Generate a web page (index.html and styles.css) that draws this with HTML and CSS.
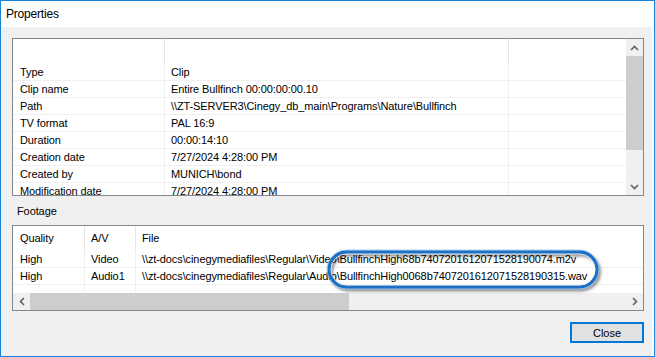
FILE: index.html
```html
<!DOCTYPE html>
<html lang="en">
<head>
    <meta charset="UTF-8">
    <title>Properties</title>
    <link rel="stylesheet" href="styles.css">
</head>
<body>
    <div class="window">
        <div class="titlebar">Properties</div>
        <div class="content">
            <div class="listbox props">
                <div class="list">
                    <div class="row head">
                        <div class="cell"></div>
                        <div class="cell"></div>
                        <div class="cell last"></div>
                    </div>
                    <div class="row"><div class="cell">Type</div><div class="cell">Clip</div><div class="cell last"></div></div>
                    <div class="row"><div class="cell">Clip name</div><div class="cell">Entire Bullfinch 00:00:00:00.10</div><div class="cell last"></div></div>
                    <div class="row"><div class="cell">Path</div><div class="cell">\\ZT-SERVER3\Cinegy_db_main\Programs\Nature\Bullfinch</div><div class="cell last"></div></div>
                    <div class="row"><div class="cell">TV format</div><div class="cell">PAL 16:9</div><div class="cell last"></div></div>
                    <div class="row"><div class="cell">Duration</div><div class="cell">00:00:14:10</div><div class="cell last"></div></div>
                    <div class="row"><div class="cell">Creation date</div><div class="cell">7/27/2024 4:28:00 PM</div><div class="cell last"></div></div>
                    <div class="row"><div class="cell">Created by</div><div class="cell">MUNICH\bond</div><div class="cell last"></div></div>
                    <div class="row"><div class="cell">Modification date</div><div class="cell">7/27/2024 4:28:00 PM</div><div class="cell last"></div></div>
                </div>
                <div class="vscroll">
                    <div class="arrow">
                        <svg width="9" height="6" viewBox="0 0 9 6"><path d="M1 5 L4.5 1.5 L8 5" fill="none" stroke="#606060" stroke-width="1.6"/></svg>
                    </div>
                    <div class="vthumb"></div>
                    <div class="track"></div>
                    <div class="arrow">
                        <svg width="9" height="6" viewBox="0 0 9 6"><path d="M1 1 L4.5 4.5 L8 1" fill="none" stroke="#606060" stroke-width="1.6"/></svg>
                    </div>
                </div>
            </div>

            <div class="group-label">Footage</div>

            <div class="listbox footage">
                <div class="frow head">
                    <div class="cell">Quality</div>
                    <div class="cell">A/V</div>
                    <div class="cell last">File</div>
                </div>
                <div class="frow"><div class="cell">High</div><div class="cell">Video</div><div class="cell last">\\zt-docs\cinegymediafiles\Regular\Video\BullfinchHigh68b7407201612071528190074.m2v</div></div>
                <div class="frow"><div class="cell">High</div><div class="cell">Audio1</div><div class="cell last">\\zt-docs\cinegymediafiles\Regular\Audio\BullfinchHigh0068b7407201612071528190315.wav</div></div>
                <div class="frow stub"><div class="cell"></div><div class="cell"></div><div class="cell last"></div></div>
                <div class="hscroll">
                    <div class="harrow">
                        <svg width="6" height="9" viewBox="0 0 6 9"><path d="M5 1 L1.5 4.5 L5 8" fill="none" stroke="#606060" stroke-width="1.6"/></svg>
                    </div>
                    <div class="hthumb"></div>
                    <div class="track"></div>
                    <div class="harrow">
                        <svg width="6" height="9" viewBox="0 0 6 9"><path d="M1 1 L4.5 4.5 L1 8" fill="none" stroke="#606060" stroke-width="1.6"/></svg>
                    </div>
                </div>
            </div>

            <div class="actions">
                <button class="btn">Close</button>
            </div>

            <!-- callout drawn over the file names -->
            <svg class="highlight" width="284" height="48" viewBox="0 0 284 48">
                <defs>
                    <filter id="shadow" x="-10%" y="-40%" width="120%" height="180%">
                        <feDropShadow dx="2" dy="2.5" stdDeviation="1.8" flood-color="#000" flood-opacity="0.5"/>
                    </filter>
                </defs>
                <rect x="7" y="6" width="268" height="35" rx="17.5" fill="none" stroke="#1d6fc6" stroke-width="3.4" filter="url(#shadow)"/>
                <rect x="9" y="8" width="264" height="31" rx="15.5" fill="none" stroke="#ffffff" stroke-width="0.9" opacity="0.8"/>
                <rect x="5" y="4" width="272" height="39" rx="19.5" fill="none" stroke="#8fc2f0" stroke-width="0.8"/>
            </svg>
        </div>
    </div>
</body>
</html>
```

FILE: styles.css
```css
body {
    margin: 0;
    font-family: "Liberation Sans", Arial, sans-serif;
    font-size: 11px;
    letter-spacing: -0.1px;
    color: #000;
}
.window {
    width: 655px;
    height: 357px;
    box-sizing: border-box;
    border: 1px solid #1883d7;
    background: #fff;
    display: flex;
    flex-direction: column;
}
.titlebar {
    height: 26px;
    padding-left: 5px;
    display: flex;
    align-items: center;
    font-size: 12px;
    letter-spacing: -0.2px;
}
.content {
    flex: 1;
    position: relative;
    background: #f0f0f0;
    margin-right: 2px;
    padding: 11px 8px 0 11px;
}
.listbox {
    border: 1px solid #828790;
    background: #fff;
}
.props {
    height: 158px;
    box-sizing: border-box;
    display: flex;
}
.list {
    flex: 1;
    overflow: hidden;
}
.row {
    display: grid;
    grid-template-columns: 152px 344px 1fr;
    height: 17px;
    box-sizing: border-box;
    border-bottom: 1px solid #f0f0f0;
    line-height: 16px;
    white-space: nowrap;
}
.row.head {
    height: 25px;
    border-bottom: none;
}
.cell {
    border-right: 1px solid #f0f0f0;
    padding-left: 6px;
    overflow: hidden;
}
.row .cell:first-child {
    padding-left: 7px;
}
.row.head .cell {
    border-right-color: #e5e5e5;
}
.cell.last {
    border-right: none;
}
.vscroll {
    width: 17px;
    background: #f0f0f0;
    display: flex;
    flex-direction: column;
}
.arrow {
    height: 17px;
    display: flex;
    align-items: center;
    justify-content: center;
}
.vthumb {
    height: 94px;
    background: #cdcdcd;
}
.track {
    flex: 1;
}
.group-label {
    height: 29px;
    padding-left: 5px;
    display: flex;
    align-items: center;
}
.footage {
    height: 86px;
    box-sizing: border-box;
    display: flex;
    flex-direction: column;
    overflow: hidden;
}
.frow {
    display: grid;
    grid-template-columns: 72px 51px 1fr;
    height: 17px;
    box-sizing: border-box;
    border-bottom: 1px solid #f0f0f0;
    line-height: 17px;
    white-space: nowrap;
}
.frow .cell:first-child {
    padding-left: 7px;
}
.frow.head {
    height: 25px;
    border-bottom: none;
    line-height: 25px;
}
.frow.head .cell {
    border-right-color: #e5e5e5;
}
.frow.stub {
    height: 8px;
    border-bottom: none;
}
.hscroll {
    height: 17px;
    background: #f0f0f0;
    display: flex;
}
.harrow {
    width: 17px;
    display: flex;
    align-items: center;
    justify-content: center;
}
.hthumb {
    width: 319px;
    background: #cdcdcd;
}
.actions {
    display: flex;
    justify-content: flex-end;
    margin-top: 11px;
}
.btn {
    width: 74px;
    height: 21px;
    box-sizing: border-box;
    border: 1px solid #0078d7;
    box-shadow: inset 0 0 0 1px #0078d7;
    background: #e1e1e1;
    font-family: inherit;
    font-size: 11px;
    padding: 0;
}
.highlight {
    position: absolute;
    left: 321px;
    top: 219px;
}
```
